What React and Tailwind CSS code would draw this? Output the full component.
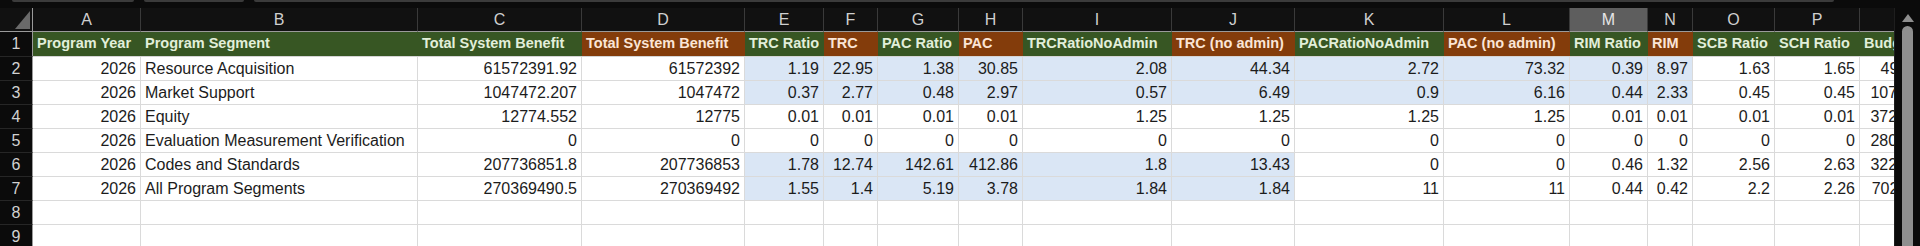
import React from 'react';

const cols = ['A', 'B', 'C', 'D', 'E', 'F', 'G', 'H', 'I', 'J', 'K', 'L', 'M', 'N', 'O', 'P', 'Q'];

// header labels, g = green, b = brown
const headers = [
  ['Program Year', 'g'],
  ['Program Segment', 'g'],
  ['Total System Benefit', 'g'],
  ['Total System Benefit', 'b'],
  ['TRC Ratio', 'g'],
  ['TRC', 'b'],
  ['PAC Ratio', 'g'],
  ['PAC', 'b'],
  ['TRCRatioNoAdmin', 'g'],
  ['TRC (no admin)', 'b'],
  ['PACRatioNoAdmin', 'g'],
  ['PAC (no admin)', 'b'],
  ['RIM Ratio', 'g'],
  ['RIM', 'b'],
  ['SCB Ratio', 'g'],
  ['SCH Ratio', 'g'],
  ['Budget', 'g'],
];

const rows = [
  ['2026', 'Resource Acquisition', '61572391.92', '61572392', '1.19', '22.95', '1.38', '30.85', '2.08', '44.34', '2.72', '73.32', '0.39', '8.97', '1.63', '1.65', '4926113.5'],
  ['2026', 'Market Support', '1047472.207', '1047472', '0.37', '2.77', '0.48', '2.97', '0.57', '6.49', '0.9', '6.16', '0.44', '2.33', '0.45', '0.45', '10747220.5'],
  ['2026', 'Equity', '12774.552', '12775', '0.01', '0.01', '0.01', '0.01', '1.25', '1.25', '1.25', '1.25', '0.01', '0.01', '0.01', '0.01', '37221640.2'],
  ['2026', 'Evaluation Measurement Verification', '0', '0', '0', '0', '0', '0', '0', '0', '0', '0', '0', '0', '0', '0', '28000000.1'],
  ['2026', 'Codes and Standards', '207736851.8', '207736853', '1.78', '12.74', '142.61', '412.86', '1.8', '13.43', '0', '0', '0.46', '1.32', '2.56', '2.63', '32210750.4'],
  ['2026', 'All Program Segments', '270369490.5', '270369492', '1.55', '1.4', '5.19', '3.78', '1.84', '1.84', '11', '11', '0.44', '0.42', '2.2', '2.26', '70241160.7'],
];

// which cells get the light blue fill
const isBlue = (r, c) => {
  if (r === 0 || r === 1) return c >= 4 && c <= 13;
  if (r === 4 || r === 5) return c >= 4 && c <= 9;
  return false;
};

const gridCols =
  'grid grid-cols-[33px_108px_277px_164px_163px_79px_54px_81px_64px_149px_123px_149px_126px_78px_45px_82px_85px_100px]';

const rowHead = 'flex items-center justify-center bg-[#0b0b0b] text-[#d2d2d2] text-[16px] border-r border-r-[#9a9a9a] border-b border-b-[#262626]';

export default function App() {
  return (
    <div className="w-[1920px] h-[246px] bg-[#0b0b0b] overflow-hidden flex flex-col font-['Liberation_Sans',sans-serif]">
      {/* strip left over from the formula bar above */}
      <div className="h-[8px] flex gap-[10px] items-start">
        <div className="ml-[12px] w-[122px] h-[2px] bg-[#3b3b3b] rounded-b" />
        <div className="w-[100px] h-[2px] bg-[#3b3b3b] rounded-b" />
        <div className="w-[1580px] h-[2px] bg-[#3b3b3b] rounded-b" />
      </div>

      <div className="flex flex-1 min-h-0">
        <div className="w-[1894px] overflow-hidden">
          <div className={`${gridCols} w-max`}>
            {/* column letters */}
            <div className="h-[24px] bg-[#111111] border-r border-r-[#9a9a9a] border-b border-b-[#9a9a9a] flex items-end justify-end pr-[2px] pb-[2px]">
              <svg width="15" height="18" viewBox="0 0 15 18">
                <polygon points="15,0 15,18 0,18" fill="#6a6a6a" />
              </svg>
            </div>
            {cols.map((c) => (
              <div
                key={c}
                className={`h-[24px] flex items-center justify-center text-[16px] border-r border-r-[#3a3a3a] border-b border-b-[#9a9a9a] ${
                  c === 'M' ? 'bg-[#5e5e5e] text-[#e6e6e6]' : 'bg-[#111111] text-[#cfcfcf]'
                }`}
              >
                {c}
              </div>
            ))}

            {/* row 1: colored headers */}
            <div className={`h-[25px] ${rowHead}`}>1</div>
            {headers.map(([label, tone], i) => (
              <div
                key={i}
                className={`h-[25px] flex items-center pl-[4px] overflow-hidden whitespace-nowrap font-bold text-[14.5px] border-b border-b-[#d4d4d4] ${
                  tone === 'g' ? 'bg-[#375623] text-[#e2efda]' : 'bg-[#833c0b] text-[#fbe5d6]'
                }`}
              >
                {label}
              </div>
            ))}

            {/* data rows */}
            {rows.map((row, r) => (
              <React.Fragment key={r}>
                <div className={`h-[24px] ${rowHead}`}>{r + 2}</div>
                {row.map((v, c) => (
                  <div
                    key={c}
                    className={`h-[24px] flex items-center overflow-hidden whitespace-nowrap text-[16px] text-[#1c1c1c] border-r border-b border-[#dadada] ${
                      isBlue(r, c) ? 'bg-[#dae6f5]' : 'bg-white'
                    } ${c === 1 ? 'justify-start pl-[4px]' : 'justify-end pr-[4px]'}`}
                  >
                    {c === 1 ? (
                      v
                    ) : (
                      <span className="font-['Liberation_Sans_Narrow','Arial_Narrow',sans-serif]">{v}</span>
                    )}
                  </div>
                ))}
              </React.Fragment>
            ))}

            {/* empty rows 8, 9 */}
            {[8, 9].map((n) => (
              <React.Fragment key={n}>
                <div className={`h-[24px] ${rowHead}`}>{n}</div>
                {cols.map((c) => (
                  <div key={c} className="h-[24px] bg-white border-r border-b border-[#dadada]" />
                ))}
              </React.Fragment>
            ))}
          </div>
        </div>

        {/* vertical scrollbar */}
        <div className="w-[26px] bg-[#0b0b0b] flex flex-col items-center border-l border-l-[#1e1e1e]">
          <svg width="12" height="8" viewBox="0 0 12 8" className="mt-[6px]">
            <polygon points="6,0 12,8 0,8" fill="#8e8e8e" />
          </svg>
          <div className="mt-[4px] w-[11px] flex-1 bg-[#8f8f8f] rounded-t-[6px]" />
        </div>
      </div>
    </div>
  );
}
